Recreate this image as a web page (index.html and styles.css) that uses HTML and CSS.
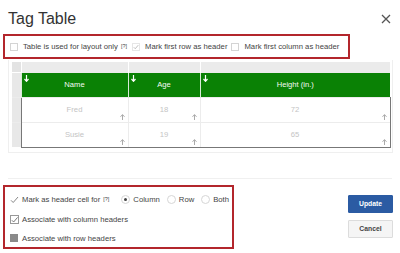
FILE: index.html
```html
<!DOCTYPE html>
<html>
<head>
<meta charset="utf-8">
<link rel="stylesheet" href="styles.css">
</head>
<body>
<div class="dialog">
  <div class="header">
    <div class="title">Tag Table</div>
    <svg class="close" width="10" height="10" viewBox="0 0 10 10"><path d="M1 1L9 9M9 1L1 9" stroke="#555" stroke-width="1.3" fill="none"/></svg>
  </div>
  <div class="opts">
    <span class="cb"></span><span class="lbl">Table is used for layout only</span><sup class="help">[?]</sup>
    <span class="cb cb-soft"><svg width="8" height="8" viewBox="0 0 8 8"><path d="M1 4.3L3 6.3L7 1.5" stroke="#aaa" stroke-width="1" fill="none"/></svg></span><span class="lbl">Mark first row as header</span>
    <span class="cb"></span><span class="lbl">Mark first column as header</span>
  </div>
  <div class="tablewrap">
    <table class="grid">
      <colgroup><col class="c0"><col class="c1"><col class="c2"><col class="c3"></colgroup>
      <tr class="toprow"><td class="corner"></td><td class="tg"></td><td class="tg"></td><td class="tg"></td></tr>
      <tr class="hrow">
        <td class="side"></td>
        <td class="hc"><svg class="dn" width="5" height="7" viewBox="0 0 5 7"><path d="M2.5 0V6M0.5 4L2.5 6.3L4.5 4" stroke="#fff" stroke-width="1.2" fill="none"/></svg>Name</td>
        <td class="hc"><svg class="dn" width="5" height="7" viewBox="0 0 5 7"><path d="M2.5 0V6M0.5 4L2.5 6.3L4.5 4" stroke="#fff" stroke-width="1.2" fill="none"/></svg>Age</td>
        <td class="hc"><svg class="dn" width="5" height="7" viewBox="0 0 5 7"><path d="M2.5 0V6M0.5 4L2.5 6.3L4.5 4" stroke="#fff" stroke-width="1.2" fill="none"/></svg>Height (in.)</td>
      </tr>
      <tr class="brow">
        <td class="side"></td>
        <td>Fred<svg class="up" width="5" height="6" viewBox="0 0 5 6"><path d="M2.5 6V0.8M0.5 2.8L2.5 0.6L4.5 2.8" stroke="#aaa" stroke-width="1" fill="none"/></svg></td>
        <td>18<svg class="up" width="5" height="6" viewBox="0 0 5 6"><path d="M2.5 6V0.8M0.5 2.8L2.5 0.6L4.5 2.8" stroke="#aaa" stroke-width="1" fill="none"/></svg></td>
        <td>72<svg class="up" width="5" height="6" viewBox="0 0 5 6"><path d="M2.5 6V0.8M0.5 2.8L2.5 0.6L4.5 2.8" stroke="#aaa" stroke-width="1" fill="none"/></svg></td>
      </tr>
      <tr class="brow last">
        <td class="side"></td>
        <td>Susie<svg class="up" width="5" height="6" viewBox="0 0 5 6"><path d="M2.5 6V0.8M0.5 2.8L2.5 0.6L4.5 2.8" stroke="#aaa" stroke-width="1" fill="none"/></svg></td>
        <td>19<svg class="up" width="5" height="6" viewBox="0 0 5 6"><path d="M2.5 6V0.8M0.5 2.8L2.5 0.6L4.5 2.8" stroke="#aaa" stroke-width="1" fill="none"/></svg></td>
        <td>65<svg class="up" width="5" height="6" viewBox="0 0 5 6"><path d="M2.5 6V0.8M0.5 2.8L2.5 0.6L4.5 2.8" stroke="#aaa" stroke-width="1" fill="none"/></svg></td>
      </tr>
    </table>
  </div>
  <div class="divider"></div>
  <div class="bottom">
    <div class="cellopts">
      <div class="row">
        <svg class="tick" width="9" height="8" viewBox="0 0 9 8"><path d="M1 4.3L3.2 6.5L8 1" stroke="#888" stroke-width="1" fill="none"/></svg>
        <span class="lbl">Mark as header cell for</span><sup class="help">[?]</sup>
        <span class="radio on"></span><span class="lbl">Column</span>
        <span class="radio"></span><span class="lbl">Row</span>
        <span class="radio"></span><span class="lbl">Both</span>
      </div>
      <div class="row">
        <span class="cb cb-on"><svg width="8" height="8" viewBox="0 0 8 8"><path d="M1 4.3L3 6.3L7.5 1" stroke="#666" stroke-width="1" fill="none"/></svg></span><span class="lbl">Associate with column headers</span>
      </div>
      <div class="row">
        <span class="cb cb-fill"></span><span class="lbl">Associate with row headers</span>
      </div>
    </div>
    <div class="buttons">
      <button class="btn primary">Update</button>
      <button class="btn">Cancel</button>
    </div>
  </div>
</div>
</body>
</html>
```

FILE: styles.css
```css
html, body {
  margin: 0;
  padding: 0;
  background: #fff;
}
body {
  font-family: "Liberation Sans", Arial, sans-serif;
  color: #444;
  width: 400px;
  height: 253px;
  overflow: hidden;
}
.header {
  display: flex;
  justify-content: space-between;
  align-items: center;
  height: 18px;
  padding: 10px 9px 6px 8px;
}
.title {
  font-size: 16px;
  line-height: 18px;
  color: #333;
}
.opts {
  box-sizing: border-box;
  margin-left: 3px;
  width: 347px;
  height: 25px;
  border: 2px solid #b3262c;
  display: flex;
  align-items: center;
  padding-left: 5px;
  font-size: 7.7px;
}
.lbl {
  white-space: nowrap;
}
.help {
  font-size: 5.5px;
  margin-left: 3px;
  margin-right: 2px;
  position: relative;
  top: -1px;
}
.cb {
  box-sizing: border-box;
  display: inline-flex;
  align-items: center;
  justify-content: center;
  width: 8px;
  height: 8px;
  border: 1px solid #d4d4d4;
  background: #fff;
  margin-right: 5px;
  flex: none;
}
.opts .lbl + .cb {
  margin-left: 4px;
}
.cb svg {
  display: block;
}
.cb-soft {
  border-color: #e6e6e6;
  margin-left: 3px;
}
.tablewrap {
  box-sizing: border-box;
  margin: 1px 0 0 8px;
  width: 385px;
  border: 1px solid #efefef;
  border-top: none;
  padding: 2px 2px 4px 3px;
}
.grid {
  border-collapse: collapse;
  table-layout: fixed;
  width: 378px;
}
.c0 { width: 9px; }
.c1 { width: 107px; }
.c2 { width: 72px; }
.c3 { width: 190px; }
.grid td {
  padding: 0;
}
.toprow td {
  height: 10px;
  background: #ebebeb;
  border-right: 1px solid #fff;
}
.toprow td.corner {
  background: #e3e3e3;
}
.side {
  background: #e8e8e8;
  border-top: 1px solid #fff;
}
.hrow td.hc {
  height: 24px;
  background: #0a8105;
  color: #f4f9f4;
  font-weight: 400;
  font-size: 7.6px;
  position: relative;
  border-left: 1px solid #d8ead8;
  text-align: center;
  vertical-align: middle;
}
.dn {
  position: absolute;
  left: 2px;
  top: 2px;
  display: block;
}
.brow td {
  height: 24px;
  border-top: 1px solid #ececec;
}
.brow td + td {
  text-align: center;
  color: #c4c4c4;
  font-size: 7.7px;
  position: relative;
  border-left: 1px solid #ececec;
  vertical-align: middle;
}
.brow td:nth-child(2) {
  border-left: 1px solid #777;
}
.brow td:last-child {
  border-right: 1px solid #777;
}
.brow.last td + td {
  border-bottom: 1px solid #777;
}
.up {
  position: absolute;
  right: 3px;
  bottom: 2px;
  display: block;
}
.divider {
  margin: 25px 8px 0 8px;
  height: 1px;
  background: #f0f0f0;
}
.bottom {
  display: flex;
  justify-content: space-between;
  margin-top: 6px;
}
.cellopts {
  box-sizing: border-box;
  margin-left: 3px;
  width: 231px;
  height: 64px;
  border: 2px solid #b3262c;
  padding: 3px 0 0 5px;
  font-size: 7.7px;
}
.row {
  display: flex;
  align-items: center;
  height: 20px;
}
.row:last-child {
  height: 17px;
}
.tick {
  margin-right: 3px;
  flex: none;
}
.radio {
  box-sizing: border-box;
  width: 9px;
  height: 9px;
  border-radius: 50%;
  border: 1px solid #d6d6d6;
  background: #fff;
  margin: 0 3px 0 7px;
  flex: none;
  display: inline-flex;
  align-items: center;
  justify-content: center;
}
.help + .radio {
  margin-left: 10px;
}
.radio.on::after {
  content: "";
  width: 3px;
  height: 3px;
  border-radius: 50%;
  background: #444;
}
.cb-on {
  border-color: #999;
  width: 9px;
  height: 9px;
  margin-right: 3px;
}
.cb-fill {
  background: #8a8a8a;
  border-color: #8a8a8a;
  margin-right: 4px;
}
.buttons {
  display: flex;
  flex-direction: column;
  gap: 7px;
  margin: 10px 7px 0 0;
}
.btn {
  box-sizing: border-box;
  width: 45px;
  height: 18px;
  font-family: "Liberation Sans", Arial, sans-serif;
  font-size: 6.8px;
  font-weight: bold;
  border: 1px solid #dcdcdc;
  background: #f5f5f5;
  color: #444;
  border-radius: 1px;
  padding: 0;
}
.btn.primary {
  background: #2b5ba3;
  border-color: #2b5ba3;
  color: #fff;
}
```
